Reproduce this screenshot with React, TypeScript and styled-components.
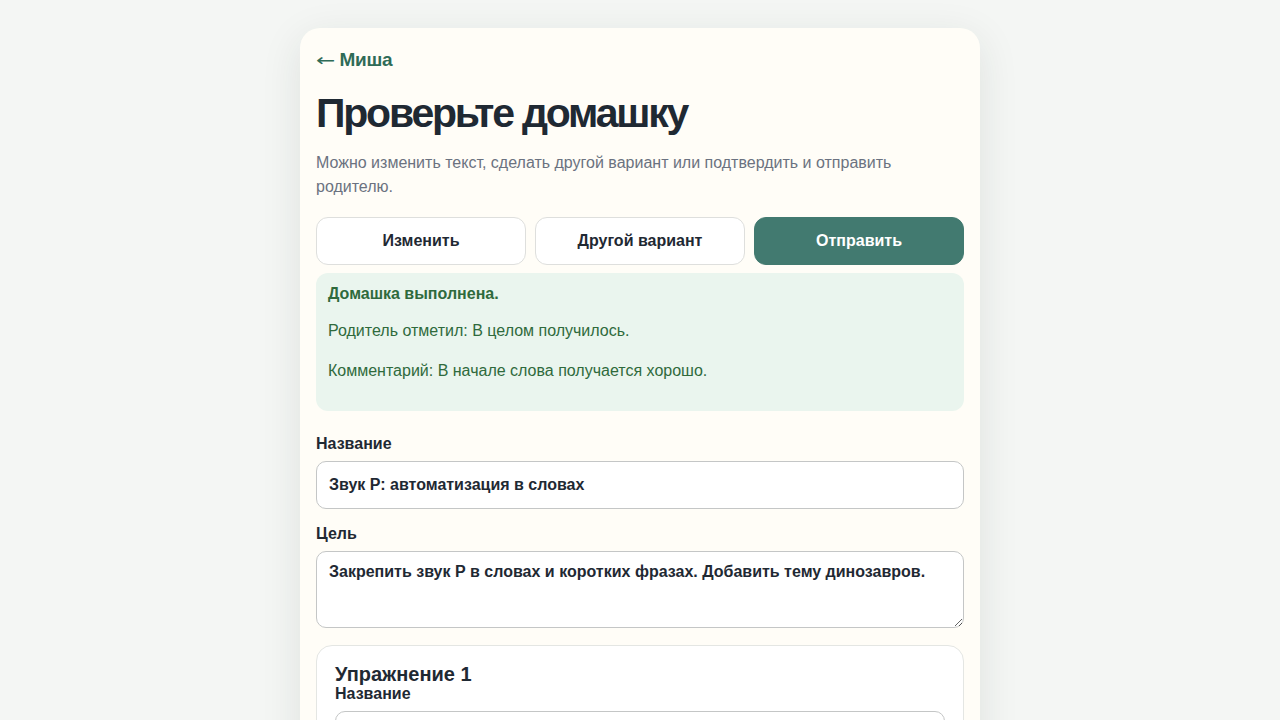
import React from 'react'
import styled, { createGlobalStyle } from 'styled-components'

const GlobalStyle = createGlobalStyle`
	html, body {
		margin: 0;
		padding: 0;
		background: #f4f6f4;
		font-family: 'Liberation Sans', Arial, sans-serif;
		color: #1f2933;
	}
	* {
		box-sizing: border-box;
	}
`

const Page = styled.div`
	display: flex;
	justify-content: center;
	padding-top: 28px;
	min-height: 100vh;
`
const Card = styled.main`
	width: 680px;
	padding: 16px 16px 40px;
	border-radius: 20px;
	background: #fffdf7;
	box-shadow: 0 10px 40px rgba(30, 50, 40, 0.1);
`
const BackLink = styled.a`
	display: inline-flex;
	align-items: center;
	margin-top: 5px;
	font-size: 19px;
	line-height: 22px;
	font-weight: 700;
	color: #2f6b57;
	text-decoration: none;
	letter-spacing: -0.3px;
`
const Arrow = styled.span`
	font-family: 'DejaVu Sans', sans-serif;
	font-weight: 400;
	font-size: 20px;
	margin-right: 7px;
	transform: scaleX(1.15) scaleY(0.85);
	transform-origin: left center;
`
const Title = styled.h1`
	margin: 18px 0 0;
	font-size: 41px;
	line-height: 48px;
	font-weight: 700;
	letter-spacing: -2.2px;
	color: #1f2933;
`
const Lead = styled.p`
	margin: 14px 0 0;
	font-size: 16px;
	line-height: 24px;
	color: #6b7280;
`
const Actions = styled.div`
	display: grid;
	grid-template-columns: repeat(3, 1fr);
	gap: 9px;
	margin-top: 18px;
`
const Button = styled.button<{ primary?: boolean }>`
	height: 48px;
	border-radius: 12px;
	font-family: inherit;
	font-size: 16px;
	font-weight: 700;
	cursor: pointer;
	border: 1px solid ${(p) => (p.primary ? '#427a70' : '#dedfdd')};
	background: ${(p) => (p.primary ? '#427a70' : '#ffffff')};
	color: ${(p) => (p.primary ? '#ffffff' : '#1f2933')};
`
const Done = styled.section`
	margin-top: 8px;
	padding: 12px 12px 31px;
	border-radius: 12px;
	background: #eaf5ee;
	color: #2f6a3c;
	font-size: 16px;
	line-height: 18px;
`
const DoneLine = styled.p<{ strong?: boolean }>`
	margin: 0 0 22px;
	font-weight: ${(p) => (p.strong ? 700 : 400)};
	&:first-child {
		margin-bottom: 19px;
	}
	&:last-child {
		margin-bottom: 0;
	}
`
const Field = styled.label`
	display: block;
	margin-top: 24px;
	& + & {
		margin-top: 16px;
	}
`
const Label = styled.span`
	display: block;
	font-size: 16px;
	font-weight: 700;
	line-height: 18px;
	margin-bottom: 8px;
	color: #1f2933;
`
const Input = styled.input`
	display: block;
	width: 100%;
	height: 48px;
	padding: 0 12px;
	border: 1px solid #c4c6c6;
	border-radius: 10px;
	background: #ffffff;
	font-family: inherit;
	font-size: 16px;
	font-weight: 700;
	color: #1f2933;
`
const TextArea = styled.textarea`
	display: block;
	width: 100%;
	height: 77px;
	padding: 10px 12px;
	border: 1px solid #c4c6c6;
	border-radius: 10px;
	background: #ffffff;
	font-family: inherit;
	font-size: 16px;
	font-weight: 700;
	line-height: 20px;
	color: #1f2933;
	resize: vertical;
`
const Exercise = styled.section`
	margin-top: 17px;
	padding: 16px 18px 20px;
	border: 1px solid #e4e6e3;
	border-radius: 16px;
	background: #ffffff;
`
const ExerciseTitle = styled.h2`
	margin: 0;
	font-size: 20px;
	line-height: 24px;
	font-weight: 700;
	color: #1f2933;
`
const ExerciseField = styled.label`
	display: block;
	margin-top: -1px;
`

export default function App() {
	return (
		<>
			<GlobalStyle />
			<Page>
				<Card>
					<BackLink href="#">
						<Arrow>←</Arrow>Миша
					</BackLink>
					<Title>Проверьте домашку</Title>
					<Lead>
						Можно изменить текст, сделать другой вариант или подтвердить и
						отправить родителю.
					</Lead>
					<Actions>
						<Button>Изменить</Button>
						<Button>Другой вариант</Button>
						<Button primary>Отправить</Button>
					</Actions>
					<Done>
						<DoneLine strong>Домашка выполнена.</DoneLine>
						<DoneLine>Родитель отметил: В целом получилось.</DoneLine>
						<DoneLine>Комментарий: В начале слова получается хорошо.</DoneLine>
					</Done>
					<Field>
						<Label>Название</Label>
						<Input defaultValue="Звук Р: автоматизация в словах" />
					</Field>
					<Field>
						<Label>Цель</Label>
						<TextArea defaultValue="Закрепить звук Р в словах и коротких фразах. Добавить тему динозавров." />
					</Field>
					<Exercise>
						<ExerciseTitle>Упражнение 1</ExerciseTitle>
						<ExerciseField>
							<Label>Название</Label>
							<Input defaultValue="Назови динозавра" />
						</ExerciseField>
					</Exercise>
				</Card>
			</Page>
		</>
	)
}
